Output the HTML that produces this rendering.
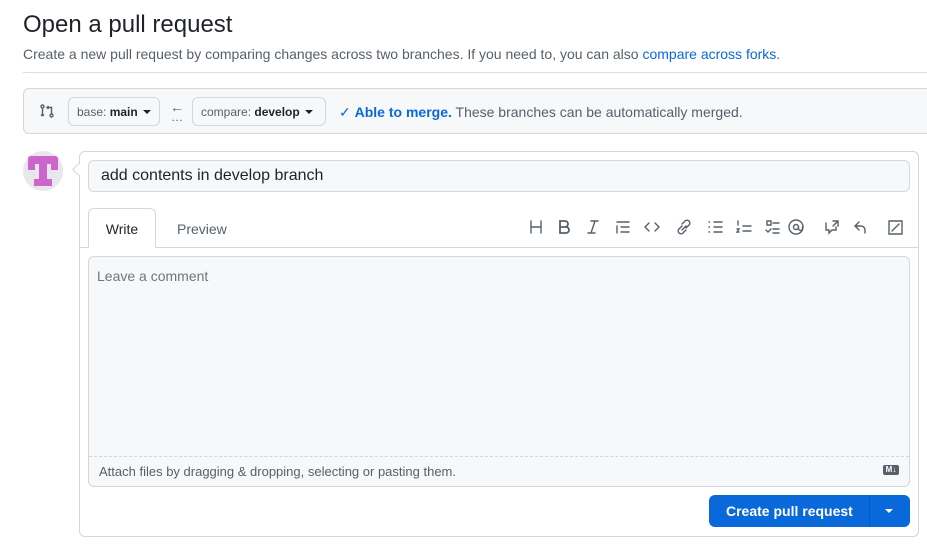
<!DOCTYPE html><html><head><style>
body{margin:0;width:927px;height:547px;overflow:hidden;background:#fff;font-family:"Liberation Sans",sans-serif;color:#1f2328;position:relative}
.a{position:absolute}
.btn{position:absolute;top:97px;height:29px;border:1px solid #d0d7de;border-radius:6px;background:#f6f8fa;font-size:12px;line-height:28px;padding:0 8px;box-sizing:border-box;color:#57606a}
.btn b{color:#1f2328;font-weight:600}
.car{display:inline-block;border-left:4px solid transparent;border-right:4px solid transparent;border-top:4px solid #1f2328;vertical-align:middle;margin-left:5px;margin-top:-2px}
.ic{position:absolute;top:219px}
</style></head><body>
<div class="a" style="left:23px;top:11px;font-size:24px">Open a pull request</div>
<div class="a" style="left:23px;top:46px;font-size:14px;color:#57606a">Create a new pull request by comparing changes across two branches. If you need to, you can also <span style="color:#0969da">compare across forks</span>.</div>
<div class="a" style="left:23px;top:72px;width:904px;height:1px;background:#d8dee4"></div>
<div class="a" style="left:23px;top:88px;width:920px;height:46px;box-sizing:border-box;border:1px solid #d0d7de;border-radius:6px;background:#f6f8fa"></div>
<svg class="a" style="left:39px;top:103px" width="16" height="16" viewBox="0 0 16 16" fill="none" stroke="#57606a" stroke-width="1.4"><circle cx="3.5" cy="3.5" r="1.5"/><circle cx="12.5" cy="12.5" r="1.5"/><path d="M3.5 5v8M12.5 11V4.5H8M9.5 3L8 4.5 9.5 6M3.5 13l-1.5-1.5M3.5 13l1.5-1.5"/></svg>
<div class="btn" style="left:68px;width:92px">base: <b>main</b><span class="car"></span></div>
<div class="a" style="left:170px;top:99px;font-size:14px;color:#57606a">←</div>
<div class="a" style="left:171px;top:110px;font-size:12px;color:#57606a">…</div>
<div class="btn" style="left:192px;width:134px">compare: <b>develop</b><span class="car"></span></div>
<div class="a" style="left:339px;top:104px;font-size:14px;color:#57606a"><span style="color:#0969da">✓ <b>Able to merge.</b></span> These branches can be automatically merged.</div>
<div class="a" style="left:23px;top:151px;width:40px;height:40px;border-radius:50%;background:#e8e8ec;overflow:hidden">
<div class="a" style="left:5px;top:5px;width:30px;height:8px;background:#cc66cc"></div>
<div class="a" style="left:5px;top:13px;width:7px;height:6px;background:#cc66cc"></div>
<div class="a" style="left:28px;top:13px;width:7px;height:6px;background:#cc66cc"></div>
<div class="a" style="left:16px;top:13px;width:8px;height:22px;background:#cc66cc"></div>
<div class="a" style="left:11px;top:28px;width:6px;height:7px;background:#cc66cc"></div>
<div class="a" style="left:23px;top:28px;width:6px;height:7px;background:#cc66cc"></div>
</div>
<div class="a" style="left:79px;top:151px;width:840px;height:386px;box-sizing:border-box;border:1px solid #d0d7de;border-radius:6px"></div>
<div class="a" style="left:74px;top:165px;width:8px;height:8px;background:#fff;border-left:1px solid #d0d7de;border-bottom:1px solid #d0d7de;transform:rotate(45deg)"></div>
<div class="a" style="left:88px;top:160px;width:822px;height:32px;box-sizing:border-box;border:1px solid #d0d7de;border-radius:6px;background:#f6f8fa;font-size:16px;line-height:30px;padding-left:12px">add contents in develop branch</div>
<div class="a" style="left:80px;top:247px;width:838px;height:1px;background:#d0d7de"></div>
<div class="a" style="left:88px;top:208px;width:68px;height:40px;box-sizing:border-box;border:1px solid #d0d7de;border-bottom:1px solid #fff;border-radius:6px 6px 0 0;background:#fff;font-size:14px;text-align:center;line-height:40px">Write</div>
<div class="a" style="left:177px;top:221px;font-size:14px;color:#57606a">Preview</div>
<svg class="a" style="left:520px;top:217px" width="400" height="20" viewBox="0 0 400 20" fill="none" stroke="#57606a" stroke-width="1.4" stroke-linecap="round">
<path d="M11 4v12M21 4v12M11 10h10"/>
<path d="M40 4h5a3 3 0 0 1 0 6h-5zM40 10h6a3 3 0 0 1 0 6h-6z" stroke-width="1.8"/>
<path d="M71 4h7M68 16h7M75 4l-4 12"/>
<path d="M97 5h12M101 10h8M101 15h8M97 9v7"/>
<path d="M129 6l-4 4 4 4M135 6l4 4-4 4"/>
<path d="M162 9l-3 3a2.5 2.5 0 0 0 4 4l3-3M166 11l3-3a2.5 2.5 0 0 0-4-4l-3 3M162 13l4-4"/>
<path d="M194 5h8M194 10h8M194 15h8M189 5h.5M189 10h.5M189 15h.5"/>
<path d="M223 9h8M223 14h8M218 4v4M217 12h2l-2 3h2"/>
<path d="M247 4h4v4h-4zM253 6h6M253 12h6M253 16h6M246 13l2 2 3-3"/>
<circle cx="276" cy="10" r="7"/><circle cx="276" cy="10" r="2.5"/><path d="M278.5 10v1.5a2 2 0 0 0 4 0V10"/>
<path d="M306 6v7h3v3l3-3h4v-3M313 4h5v5M318 4l-5 5"/>
<path d="M339 5l-4 4 4 4M335 9h6a4 4 0 0 1 4 4v3"/>
<path d="M369 4h13v13h-13zM372 14l7-7"/>
</svg>
<div class="a" style="left:88px;top:256px;width:822px;height:231px;box-sizing:border-box;border:1px solid #d0d7de;border-radius:6px;background:#f6f8fa"></div>
<div class="a" style="left:97px;top:268px;font-size:14px;color:#6e7781">Leave a comment</div>
<div class="a" style="left:89px;top:456px;width:820px;border-top:1px dashed #d0d7de"></div>
<div class="a" style="left:99px;top:464px;font-size:13px;color:#57606a">Attach files by dragging &amp; dropping, selecting or pasting them.</div>
<div class="a" style="left:883px;top:465px;width:16px;height:10px;background:#57606a;border-radius:2px;color:#fff;font-size:8px;line-height:10px;text-align:center;font-weight:bold">M↓</div>
<div class="a" style="left:709px;top:495px;width:201px;height:32px;background:#0969da;border-radius:6px"></div>
<div class="a" style="left:869px;top:495px;width:1px;height:32px;background:#0757b8"></div>
<div class="a" style="left:726px;top:503px;font-size:14px;color:#fff;font-weight:bold">Create pull request</div>
<div class="a" style="left:885px;top:509px;border-left:4px solid transparent;border-right:4px solid transparent;border-top:4px solid #fff"></div>
</body></html>
